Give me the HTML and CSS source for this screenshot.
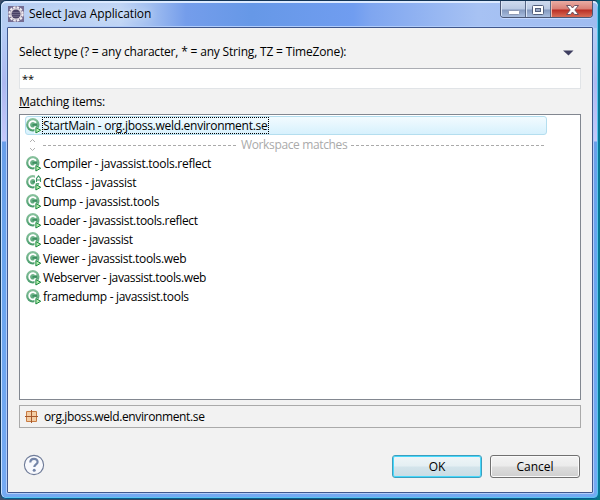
FILE: index.html
```
<!DOCTYPE html>
<html lang="en">
<head>
<meta charset="utf-8">
<title>Select Java Application</title>
<link rel="stylesheet" href="styles.css">
</head>
<body>
<svg class="defs" width="0" height="0" aria-hidden="true">
  <defs>
    <linearGradient id="green" x1="0" y1="0" x2="0" y2="1"><stop offset="0" stop-color="#8cc3a0"/><stop offset="1" stop-color="#459b69"/></linearGradient>
    <symbol id="class" viewBox="0 0 16 16">
      <circle cx="6.8" cy="6.800" r="6.7" fill="url(#green)"/>
      <path d="M10 4.800A3.700 3.700 0 1 0 10 8.800" fill="none" stroke="#fff" stroke-width="1.800"/>
      <path d="M6.500 6.800h4.500" stroke="#3d8f60" stroke-width="1.800"/>
      <path d="M8.500 7.800v8.200h2l5.500-3.500z" fill="#fff"/>
      <path d="M9.900 9.500v5.500l4.800-2.750z" fill="#b9efb0" stroke="#16863b"/>
    </symbol>
    <symbol id="abstract" viewBox="0 0 16 16">
      <use href="#class"/>
      <path d="M9 0h7v8H9z" fill="#fff"/>
      <path d="M10.500 7V3.500l2-2.500 2 2.500V7M10.500 5h4" fill="none" stroke="#3c9765" stroke-width="1.1"/>
    </symbol>
  </defs>
</svg>
<div class="desktop">
<main class="window">
  <header class="titlebar">
    <svg class="app-icon" viewBox="0 0 16 16"><path d="M0 0h16v16H0z" fill="#756d92"/><circle cx="8" cy="8" r="6.6" fill="none" stroke="#f2edf0" stroke-width="2.200" stroke-dasharray="2.5 1"/><circle cx="8" cy="8" r="5.700" fill="#e2dbe0"/><circle cx="8" cy="8" r="4.500" fill="#484064"/><path d="M4 6.5h8M4 8.5h8M4.5 10.3h7" stroke="#77708f" stroke-width=".8"/></svg>
    <h1 class="title">Select Java Application</h1>
    <div class="controls">
      <span class="control"><svg width="25" height="17"><rect x="7.5" y="9.5" width="11" height="4" rx="1" fill="#fff" stroke="#8c98b3"/></svg></span>
      <span class="control"><svg width="24" height="17"><rect x="6.500" y="4.500" width="11" height="9" rx="1" fill="#fff" stroke="#54617d"/><rect x="9.500" y="7.500" width="5" height="3" fill="#9ba9c4" stroke="#54617d"/></svg></span>
      <span class="control close"><svg width="42" height="17"><path d="M15.500 4.500h4l2 2.500 2-2.500h4L23.800 9l3.700 4.500h-4l-2-2.500-2 2.500h-4L19.200 9z" fill="#fff" stroke="#6c5262"/></svg></span>
    </div>
  </header>
  <section class="client">
    <div class="prompt-row"><label class="prompt">Select <u>t</u>ype (? = any character, * = any String, TZ = TimeZone):</label><svg class="menu-arrow" width="11" height="6"><path d="M0 .5h10.500L5.500 5.500z" fill="#3e3e60"/></svg></div>
    <div class="field">**</div>
    <div class="matching"><u>M</u>atching items:</div>
    <div class="list">
      <div class="item selected"><svg class="icon"><use href="#class"/></svg><span class="name n1">StartMain - org.jboss.weld.environment.se</span></div>
      <div class="divider"><svg class="updown" width="7" height="14"><path d="M1 4l2.500-2.500L6 4M1 10l2.500 2.500L6 10" fill="none" stroke="#b0b0b0"/></svg><svg class="dash left" height="1"><path d="M0 .5h200" /></svg><span class="divider-text">Workspace matches</span><svg class="dash right" height="1"><path d="M0 .5h200"/></svg></div>
      <div class="item"><svg class="icon"><use href="#class"/></svg><span class="name n2">Compiler - javassist.tools.reflect</span></div>
      <div class="item"><svg class="icon"><use href="#abstract"/></svg><span class="name n3">CtClass - javassist</span></div>
      <div class="item"><svg class="icon"><use href="#class"/></svg><span class="name n4">Dump - javassist.tools</span></div>
      <div class="item"><svg class="icon"><use href="#class"/></svg><span class="name n5">Loader - javassist.tools.reflect</span></div>
      <div class="item"><svg class="icon"><use href="#class"/></svg><span class="name n6">Loader - javassist</span></div>
      <div class="item"><svg class="icon"><use href="#class"/></svg><span class="name n7">Viewer - javassist.tools.web</span></div>
      <div class="item"><svg class="icon"><use href="#class"/></svg><span class="name n8">Webserver - javassist.tools.web</span></div>
      <div class="item"><svg class="icon"><use href="#class"/></svg><span class="name n9">framedump - javassist.tools</span></div>
    </div>
    <div class="status"><svg width="13" height="13"><path d="M1.500 1.500h10v10h-10z" fill="#f3cda4" stroke="#c87b43"/><path d="M6.500 0v13M0 6.500h13" stroke="#a5572b"/></svg><span class="status-text">org.jboss.weld.environment.se</span></div>
    <footer class="footer">
      <svg class="help" width="22" height="22"><circle cx="11" cy="11" r="9.600" fill="#f8f9fd" stroke="#6e7b98" stroke-width="1.100"/><path d="M7.300 8.500C7.300 3.700 14.700 3.900 14.600 8c0 2.500-3.300 2.300-3.300 5" fill="none" stroke="#7485a8" stroke-width="2.200"/><circle cx="11.200" cy="16.300" r="1.500" fill="#7485a8"/></svg>
      <button class="button ok">OK</button>
      <button class="button">Cancel</button>
    </footer>
  </section>
</main>
</div>
</body>
</html>
```
FILE: styles.css
```
* { box-sizing: border-box; }
body { margin: 0; width: 600px; height: 500px; overflow: hidden; font: 12px/16px "Open Sans", "Noto Sans", sans-serif; color: #000; }
.defs { display: block; }
svg { display: block; flex: none; }
.desktop { width: 600px; height: 500px; background: linear-gradient(90deg, #40506c, #243f53 40%, #163f58 80%, #087a86); }
.window {
  height: 499px;
  border: 1px solid #123456;
  border-right: 2px solid #087997;
  border-bottom-color: #075d91;
  border-radius: 6px;
  padding: 0 5px 6px 6px;
  background:
    linear-gradient(#b6cdf5 0, #adb8f0 55px, #c4c8fa 113px, #6a9fe9 114px, #69a4ee 220px, #76aaf3 100%) 0 27px / 100% 100% no-repeat,
    linear-gradient(90deg, #b5cdf2, #c0d5f5 20%, #a1bef0 25%, #749deb 31%, #6698e7 42%, #709df0 59%, #7fa6f0 62%, #a7c2f3 80%, #9fbcf1);
  box-shadow: inset 0 2px #dceaff, inset 1px 0 #c7e0ff, inset -1px -1px #5ac5ef;
}
.titlebar { display: flex; height: 26px; padding: 5px 0 0 1px; }
.app-icon { width: 16px; height: 16px; }
.title { margin: 0 auto 0 5px; font-size: 12px; line-height: 16px; font-weight: 400; letter-spacing: -.1px; white-space: nowrap; text-shadow: 0 0 7px #e2efff; }
.controls { display: flex; width: 93px; height: 17px; margin: -5px 0 0; border: 1px solid #4b5876; border-top: 0; border-radius: 0 0 4px 4px; overflow: hidden; box-shadow: 0 1px #c5d9ff; }
.control { display: flex; width: 25px; height: 17px; border-right: 1px solid #596987; background: linear-gradient(#cfdbee 0, #b9c9e3 48%, #8398bd 52%, #aec3e4); box-shadow: inset 1px 0 #dce6f6; }
.close { width: 42px; border: 0; background: linear-gradient(#e9aca4, #d97e74 48%, #b92d24 52%, #dc765e); box-shadow: inset 1px 0 #f2b8ab; }
.client { height: 466px; border: 1px solid #40578c; border-radius: 1px; background: #f2f2f2; padding: 16px 11px 0; box-shadow: 0 0 0 1px #b0ccfa; }
.prompt-row { display: flex; align-items: center; justify-content: space-between; height: 16px; padding-right: 7px; }
.prompt { letter-spacing: -.18px; white-space: nowrap; }
.menu-arrow { margin-top: 1px; }
u { text-decoration-thickness: 1px; text-underline-offset: 1px; }
.field { height: 21px; margin-top: 8px; padding: 2px; border: 1px solid #e1e4e7; border-top-color: #abadb3; background: #fff; font-size: 11px; }
.matching { margin-top: 5px; height: 16px; letter-spacing: -.2px; }
.list { height: 286px; margin-top: 4px; padding: 1px 5px; border: 1px solid #828790; background: #fff; }
.item { display: flex; align-items: center; height: 19px; padding-left: 1px; white-space: nowrap; }
.icon { width: 16px; height: 16px; }
.name { margin-left: 1px; }
.n1 { letter-spacing: -.28px; }
.n2, .n4 { letter-spacing: -.27px; }
.n3 { letter-spacing: -.22px; }
.n5 { letter-spacing: -.33px; }
.n6, .n8 { letter-spacing: -.36px; }
.n7, .n9 { letter-spacing: -.31px; }
.selected { width: 522px; padding-left: 0; border: 1px solid #b4deef; border-radius: 3px; background: linear-gradient(#f2fbff, #d7f1fd); }
.selected .name { width: 227px; height: 17px; border: 1px dotted #000; line-height: 15px; margin-left: 0; }
.divider { display: flex; align-items: center; height: 19px; color: #aaa; }
.updown { margin-left: 4px; }
.dash { margin-top: 1px; }
.dash path { stroke: #aaa; stroke-dasharray: 3 2; }
.left { width: 195px; margin-left: 7px; }
.right { width: 194px; }
.divider-text { width: 107px; margin: 0 3px; white-space: nowrap; letter-spacing: -.36px; }
.status { display: flex; align-items: center; height: 23px; margin-top: 5px; padding-left: 5px; border: 1px solid #aaa; }
.status-text { margin-left: 6px; letter-spacing: -.37px; }
.footer { display: flex; height: 23px; margin-top: 27px; padding-right: 1px; align-items: center; }
.help { margin: -4px auto 0 4px; }
.button { width: 90px; height: 23px; margin-left: 8px; padding: 0; border: 1px solid #707070; border-radius: 3px; background: linear-gradient(#f3f3f3, #ebebeb 48%, #ddd 52%, #cfcfcf); box-shadow: inset 0 0 0 1px #fafafa; font: inherit; color: #000; }
.ok { border-color: #3c9fbe; box-shadow: inset 0 0 0 1px #45d8fc; background: linear-gradient(#eff5f7, #e4eff3 48%, #d3e4eb 52%, #c9dce4); }
```
